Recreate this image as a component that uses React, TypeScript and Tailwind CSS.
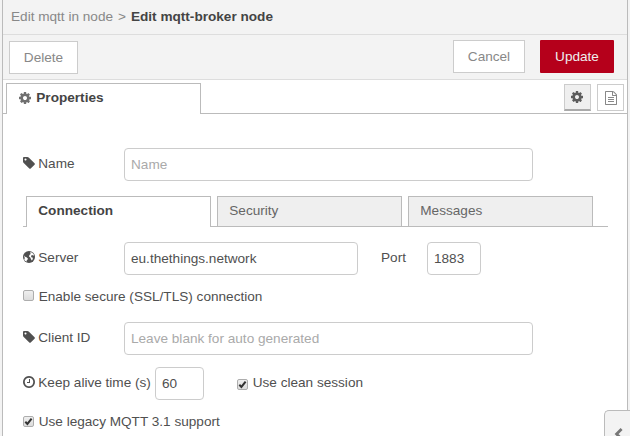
import type { ReactNode } from "react";

const COG =
  "M1152 896q0-106-75-181t-181-75-181 75-75 181 75 181 181 75 181-75 75-181zm512-109v222q0 12-8 23t-20 13l-185 28q-19 54-39 91 35 50 107 138 10 12 10 25t-9 23q-27 37-99 108t-94 71q-12 0-26-9l-138-108q-44 23-91 38-16 136-29 186-7 28-36 28h-222q-14 0-24.5-8.5t-11.5-21.5l-28-184q-49-16-90-37l-141 107q-10 9-25 9-14 0-25-11-126-114-165-168-7-10-7-23 0-12 8-23 15-21 51-66.5t54-70.5q-27-50-41-99l-183-27q-13-2-21-12.5t-8-23.5v-222q0-12 8-23t19-13l186-28q14-46 39-92-40-57-107-138-10-12-10-24 0-10 9-23 26-36 98.500-107.500t94.500-71.500q13 0 26 10l138 107q44-23 91-38 16-136 29-186 7-28 36-28h222q14 0 24.500 8.500t11.500 21.500l28 184q49 16 90 37l142-107q9-9 24-9 13 0 25 10 129 119 165 170 7 8 7 22 0 12-8 23-15 21-51 66.500t-54 70.500q26 50 41 98l183 28q13 2 21 12.500t8 23.500z";
const TAG =
  "M576 448q0-53-37.500-90.500t-90.500-37.500-90.500 37.500-37.500 90.500 37.500 90.500 90.500 37.500 90.500-37.500 37.500-90.500zm1067 576q0 53-37 90l-491 492q-39 37-91 37-53 0-90-37l-715-716q-38-37-64.500-101t-26.500-117v-416q0-52 38-90t90-38h416q53 0 117 26.500t102 64.500l715 714q37 39 37 91z";
const CLOCK =
  "M1024 544v448q0 14-9 23t-23 9h-320q-14 0-23-9t-9-23v-64q0-14 9-23t23-9h224v-352q0-14 9-23t23-9h64q14 0 23 9t9 23zm416 352q0-148-73-273t-198-198-273-73-273 73-198 198-73 273 73 273 198 198 273 73 273-73 198-198 73-273zm224 0q0 209-103 385.500t-279.500 279.500-385.500 103-385.500-103-279.500-279.500-103-385.500 103-385.500 279.500-279.500 385.500-103 385.500 103 279.500 279.500 103 385.500z";
const FILE =
  "M1596 380q28 28 48 76t20 88v1152q0 40-28 68t-68 28h-1344q-40 0-68-28t-28-68v-1600q0-40 28-68t68-28h896q40 0 88 20t76 48zm-444-244v376h376q-10-29-22-41l-313-313q-12-12-41-22zm384 1528v-1024h-416q-40 0-68-28t-28-68v-416h-768v1536h1280zm-1024-864q0-14 9-23t23-9h704q14 0 23 9t9 23v64q0 14-9 23t-23 9h-704q-14 0-23-9t-9-23v-64zm736 224q14 0 23 9t9 23v64q0 14-9 23t-23 9h-704q-14 0-23-9t-9-23v-64q0-14 9-23t23-9h704zm0 256q14 0 23 9t9 23v64q0 14-9 23t-23 9h-704q-14 0-23-9t-9-23v-64q0-14 9-23t23-9h704z";

function Icon({ d, className = "" }: { d: string; className?: string }) {
  return (
    <svg viewBox="0 0 1792 1792" className={`size-[14px] shrink-0 fill-current ${className}`}>
      <path d={d} />
    </svg>
  );
}

function Globe() {
  return (
    <svg viewBox="0 0 14 14" className="size-[14px] shrink-0">
      <circle cx="7" cy="7" r="6" fill="#505050" />
      <path d="M8 2.300 9.800 2.500 11.600 4 12 5.400 11 5.600 10.300 5 9 5.700 9.300 7.200 10.900 7.800 10.600 9.600 9.800 10.600 9 9.200 8.300 7.500 7 6.400 7.400 4.900 8.700 4.100Z" fill="#fff" />
      <path d="M2 5.400 3.200 6.700 4.500 7.300 5.900 8.400 5.500 9.700 4.700 10.500 4.500 11.700 3 10.700 2.200 9.200 2.800 8.300Z" fill="#fff" />
    </svg>
  );
}

function Check({ checked = false }: { checked?: boolean }) {
  return (
    <span className="flex size-[11px] shrink-0 items-center justify-center rounded-[2px] border border-[#adadad] bg-linear-to-b from-[#efefef] to-[#dcdcdc]">
      {checked && (
        <svg viewBox="0 0 9 9" className="size-[9px]">
          <path d="M1.3 4.7 3.4 6.9 7.6 1.6" fill="none" stroke="#333" strokeWidth="2" />
        </svg>
      )}
    </span>
  );
}

function Label({ icon, children, className }: { icon: ReactNode; children: ReactNode; className: string }) {
  return (
    <div className={`flex items-center gap-[2px] pb-[2px] ${className}`}>
      {icon}
      <span className="pt-[2px] pl-[0.3px]">{children}</span>
    </div>
  );
}

const field = "flex h-[33px] items-center rounded-[4px] border border-[#ccc] bg-white px-[6px] pt-px";
const tab = "h-[30px] w-[185px] border border-b-0 border-[#bbb] pl-[11.3px] leading-[28px]";

export default function App() {
  return (
    <div className="relative flex h-[436px] w-[630px] overflow-hidden bg-[#f3f3f3] font-['Liberation_Sans',Arial,sans-serif] text-[13.6px] text-[#505050]">
      <div className="ml-[2px] flex w-[626px] flex-col border-x border-[#bbb] bg-white">
        <header className="flex h-[35px] items-center border-b border-[#ddd] bg-[#f3f3f3] pl-[8px] whitespace-pre text-[#888]">
          <span>Edit mqtt in node</span>
          <span className="px-[5px]">&gt;</span>
          <b className="text-[#444]">Edit mqtt-broker node</b>
        </header>
        <div className="flex h-[45px] items-center border-b border-[#ddd] bg-[#f3f3f3] pr-[13px] pl-[6px] text-[#888]">
          <button className="mt-[1px] h-[33px] w-[69px] border border-[#ccc] bg-white pt-px">Delete</button>
          <button className="mr-[15px] mb-[1px] ml-auto h-[33px] w-[72px] border border-[#ccc] bg-white pt-px">Cancel</button>
          <button className="mb-[1px] h-[33px] w-[74px] rounded-[1px] bg-[#b5001b] pt-px text-[#eee]">Update</button>
        </div>
        <div className="flex h-[34px] items-end border-b border-[#bbb] pr-[3px] pl-[3px]">
          <div className="-mb-px flex h-[31px] w-[195px] items-center border border-b-0 border-[#bbb] bg-white pb-[2px] pl-[11px] font-bold text-[#444]">
            <Icon d={COG} className="mr-[4.300px] text-[#707070]" />
            Properties
          </div>
          <div className="mb-[2px] ml-auto flex gap-[6px]">
            <button className="flex h-[27px] w-[27px] items-center justify-center border border-b-2 border-[#ccc] border-b-[#aaa] bg-[#efefef] pr-px text-[#5c5c5c]">
              <Icon d={COG} />
            </button>
            <button className="flex h-[27px] w-[27px] items-center justify-center border border-[#ccc] bg-white text-[#888]">
              <Icon d={FILE} />
            </button>
          </div>
        </div>

        <main className="flex flex-col pt-[34px] pl-[19px]">
          <div className="flex h-[33px] items-center">
            <Label icon={<Icon d={TAG} />} className="w-[102px]">Name</Label>
            <div className={`${field} w-[409px] text-[#aaa]`}>Name</div>
          </div>

          <div className="mt-[15px] ml-[1px] flex h-[31px] w-[585px] gap-[6px] border-b border-[#bbb] pl-[3px]">
            <div className={`${tab} h-[31px] bg-white font-bold text-[#444]`}>Connection</div>
            <div className={`${tab} bg-[#efefef] text-[#666]`}>Security</div>
            <div className={`${tab} bg-[#efefef] text-[#666]`}>Messages</div>
          </div>

          <div className="mt-[15px] flex h-[33px] items-center">
            <Label icon={<Globe />} className="w-[102px]">Server</Label>
            <div className={`${field} w-[234px]`}>eu.thethings.network</div>
            <span className="w-[69px] pb-px pl-[23px]">Port</span>
            <div className={`${field} w-[54px]`}>1883</div>
          </div>

          <div className="mt-[11px] flex h-[20px] items-center gap-[4.700px] pb-px pl-[1px]">
            <Check />
            <span className="pt-[3px]">Enable secure (SSL/TLS) connection</span>
          </div>

          <div className="mt-[16px] flex h-[33px] items-center">
            <Label icon={<Icon d={TAG} />} className="w-[102px]">Client ID</Label>
            <div className={`${field} w-[409px] text-[#aaa]`}>Leave blank for auto generated</div>
          </div>

          <div className="mt-[12px] flex h-[33px] items-center">
            <Label icon={<Icon d={CLOCK} />} className="w-[133px]">Keep alive time (s)</Label>
            <div className={`${field} w-[49px]`}>60</div>
            <div className="ml-[33px] flex items-center gap-[4.700px] pt-[2px]">
              <Check checked />
              <span className="pb-[3px]">Use clean session</span>
            </div>
          </div>

          <div className="mt-[12px] flex h-[20px] items-center gap-[4.700px] pb-px pl-[1px]">
            <Check checked />
            <span className="pt-px">Use legacy MQTT 3.1 support</span>
          </div>
        </main>
      </div>

      <div className="absolute top-[410px] left-[604px] h-[30px] w-[27px] rounded-tl-[5px] border border-r-0 border-[#bbb] bg-[#f3f3f3]">
        <svg viewBox="0 0 10 14" className="mt-[16px] ml-[8px] h-[14px] w-[10px]">
          <path d="M8.600 2 3.600 7l5 5" fill="none" stroke="#777" strokeWidth="2.800" />
        </svg>
      </div>
    </div>
  );
}
